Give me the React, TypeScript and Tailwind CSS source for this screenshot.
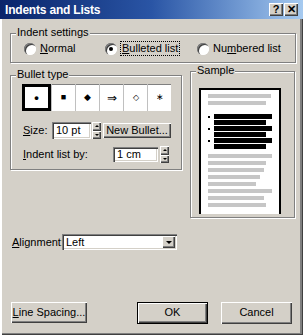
import React from "react";

const raised =
  "bg-[#d4d0c8] shadow-[inset_1px_1px_0_#ffffff,inset_-1px_-1px_0_#404040,inset_-2px_-2px_0_#808080]";
const sunken =
  "bg-white shadow-[inset_1px_1px_0_#808080,inset_2px_2px_0_#404040,inset_-1px_-1px_0_#ffffff,inset_-2px_-2px_0_#d4d0c8]";
const etched = "border border-[#808080] shadow-[1px_1px_0_#ffffff,inset_1px_1px_0_#ffffff]";

function Group({ label, className, children }: { label: string; className: string; children?: React.ReactNode }) {
  return (
    <div className={`relative ${etched} ${className}`}>
      <span className="absolute -top-[8px] left-[5px] bg-[#d4d0c8] px-[1px] leading-[13px]">{label}</span>
      {children}
    </div>
  );
}

function Radio({ checked, children, focus }: { checked?: boolean; children: React.ReactNode; focus?: boolean }) {
  return (
    <div className="flex items-center gap-[4px]">
      <span className="relative flex h-[12px] w-[12px] items-center justify-center rounded-full bg-white shadow-[inset_1px_1px_0_#808080,inset_2px_2px_0_#404040,inset_-1px_-1px_0_#ffffff]">
        {checked && <span className="h-[4px] w-[4px] rounded-full bg-black" />}
      </span>
      <span className={focus ? "outline outline-1 outline-dotted outline-black px-[1px] leading-[13px]" : "leading-[13px]"}>
        {children}
      </span>
    </div>
  );
}

function Spinner() {
  return (
    <div className="flex h-[17px] w-[9px] flex-col">
      <div className={`flex flex-1 items-center justify-center ${raised}`}>
        <span className="h-0 w-0 border-x-[2px] border-b-[2px] border-x-transparent border-b-black" />
      </div>
      <div className={`flex flex-1 items-center justify-center ${raised}`}>
        <span className="h-0 w-0 border-x-[2px] border-t-[2px] border-x-transparent border-t-black" />
      </div>
    </div>
  );
}

function Btn({ children, isDefault, className }: { children: React.ReactNode; isDefault?: boolean; className: string }) {
  return (
    <div className={`flex items-center justify-center ${isDefault ? "border border-black" : ""} ${className}`}>
      <div className={`flex h-full w-full items-center justify-center ${raised}`}>{children}</div>
    </div>
  );
}

const BULLETS = ["•", "■", "◆", "⇒", "◇", "∗"];

const GRAY_TOP = [63, 58];
const GRAY_BOTTOM = [64, 58, 56, 52, 48, 64, 56, 58];

export default function App() {
  return (
    <div className="flex h-[335px] w-[303px] flex-col overflow-hidden bg-[#d4d0c8] font-['Liberation_Sans',Arial,sans-serif] text-[11px] text-black shadow-[inset_2px_0_0_#ffffff,inset_-1px_-1px_0_#404040,inset_-3px_-2px_0_#808080]">
      {/* title bar */}
      <div className="flex h-[19px] shrink-0 items-center justify-between bg-gradient-to-r from-[#0a246a] via-[#2a55a5] to-[#a6caf0] pl-[5px] pr-[5px]">
        <span className="text-[12px] font-bold tracking-[-0.2px] text-white">Indents and Lists</span>
        <div className="flex gap-[1px]">
          <div className={`flex h-[13px] w-[14px] items-center justify-center text-[11px] font-bold leading-none ${raised}`}>?</div>
          <div className={`flex h-[13px] w-[14px] items-center justify-center text-[11px] font-bold leading-none ${raised}`}>✕</div>
        </div>
      </div>

      <div className="flex flex-col pl-[10px]">
        <Group label="Indent settings" className="mt-[14px] h-[30px] w-[286px]">
          <div className="flex pl-[13px] pt-[8px]">
            <div className="w-[81px]">
              <Radio><span className="underline">N</span>ormal</Radio>
            </div>
            <div className="w-[92px]">
              <Radio checked focus><span className="underline">B</span>ulleted list</Radio>
            </div>
            <Radio>Nu<span className="underline">m</span>bered list</Radio>
          </div>
        </Group>

        <div className="mt-[8px] flex gap-[8px]">
          <Group label="Bullet type" className="mt-[4px] h-[95px] w-[172px]">
            <div className="ml-[11px] mt-[8px] flex h-[27px] w-[149px] bg-white shadow-[inset_0_1px_0_#808080]">
              {BULLETS.map((b, i) => (
                <div
                  key={b}
                  className={`flex h-full flex-1 items-center justify-center ${
                    i === 0 ? "border-[3px] border-black" : "border-l border-[#c0c0c0]"
                  }`}
                >
                  <span className={i === 0 ? "text-[13px] font-bold" : i === 3 ? "text-[12px]" : i === 4 ? "text-[8px]" : "text-[9px]"}>
                    {b}
                  </span>
                </div>
              ))}
            </div>
            <div className="ml-[12px] mt-[11px] flex items-center">
              <span className="w-[29px]"><span className="underline">S</span>ize:</span>
              <div className={`flex h-[17px] w-[39px] items-center pl-[4px] ${sunken}`}>10 pt</div>
              <div className="ml-[1px]"><Spinner /></div>
              <Btn className="ml-[2px] h-[15px] w-[68px]">New Bullet...</Btn>
            </div>
            <div className="ml-[12px] mt-[7px] flex items-center">
              <span className="w-[90px]"><span className="underline">I</span>ndent list by:</span>
              <div className={`flex h-[15px] w-[45px] items-center pl-[4px] ${sunken}`}>1 cm</div>
              <div className="ml-[2px]"><Spinner /></div>
            </div>
          </Group>

          <Group label="Sample" className="h-[147px] w-[105px]">
            <div className="ml-[8px] mt-[16px] flex h-[126px] w-[82px] flex-col gap-[3px] border-l-2 border-r-2 border-t-2 border-black bg-white pl-[7px] pt-[4px]">
              {GRAY_TOP.map((w, i) => (
                <div key={"t" + i} className="h-[4px] bg-[#c6c6c6]" style={{ width: w }} />
              ))}
              <div className="mt-[6px] flex flex-col gap-[1px]">
                {[0, 1, 2].map((i) => (
                  <div key={i} className="flex flex-col gap-[1px]">
                    <div className="flex items-center">
                      <span className="h-[2px] w-[2px] bg-black" />
                      <div className="ml-[4px] h-[5px] w-[58px] bg-black" />
                    </div>
                    <div className="ml-[6px] h-[5px] w-[52px] bg-black" />
                  </div>
                ))}
              </div>
              <div className="mt-[2px] flex flex-col gap-[3px]">
                {GRAY_BOTTOM.map((w, i) => (
                  <div key={"b" + i} className="h-[4px] bg-[#c6c6c6]" style={{ width: w }} />
                ))}
              </div>
            </div>
          </Group>
        </div>

        <div className="mt-[16px] flex items-center">
          <span className="w-[52px] pl-[2px]"><span className="underline">A</span>lignment:</span>
          <div className={`flex h-[16px] w-[115px] items-center justify-between pl-[4px] pr-[2px] ${sunken}`}>
            <span>Left</span>
            <div className={`flex h-[12px] w-[13px] items-center justify-center ${raised}`}>
              <span className="h-0 w-0 border-x-[3px] border-t-[3px] border-x-transparent border-t-black" />
            </div>
          </div>
        </div>

        <div className="mt-[51px] flex items-center">
          <Btn className="ml-[1px] h-[21px] w-[76px]">
            <span><span className="underline">L</span>ine Spacing...</span>
          </Btn>
          <Btn isDefault className="ml-[50px] h-[22px] w-[71px]">OK</Btn>
          <Btn className="ml-[13px] h-[22px] w-[71px]">Cancel</Btn>
        </div>
      </div>
    </div>
  );
}
